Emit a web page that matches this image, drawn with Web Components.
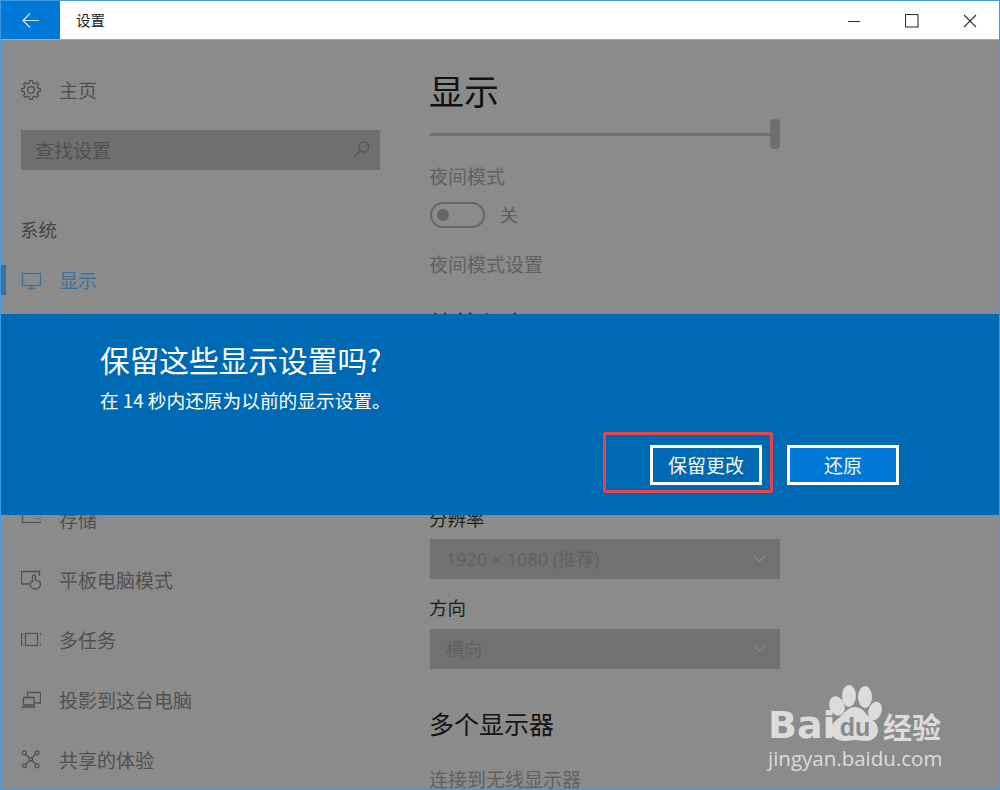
<!DOCTYPE html>
<html lang="zh-CN">
<head>
<meta charset="utf-8">
<title>设置</title>
<style>
html,body{margin:0;padding:0;width:1000px;height:790px;overflow:hidden;background:#8b8b8b}
body{font-family:"Noto Sans CJK SC","Microsoft YaHei",sans-serif}
</style>
</head>
<body>
<settings-window>
  <title-bar slot="top">设置</title-bar>
  <side-nav slot="side">
    <nav-row icon="gear">主页</nav-row>
    <search-box>查找设置</search-box>
    <nav-group>系统</nav-group>
    <nav-row icon="monitor" active>显示</nav-row>
    <nav-gap></nav-gap>
    <nav-row icon="storage">存储</nav-row>
    <nav-row icon="tablet">平板电脑模式</nav-row>
    <nav-row icon="multi">多任务</nav-row>
    <nav-row icon="project">投影到这台电脑</nav-row>
    <nav-row icon="share">共享的体验</nav-row>
  </side-nav>
  <display-page slot="main"></display-page>
  <keep-dialog slot="over"></keep-dialog>
  <baidu-mark slot="over"></baidu-mark>
</settings-window>

<script>
const FONT = '"Noto Sans CJK SC","Microsoft YaHei",sans-serif';
function gearPath(){
  const n=8,cx=10,cy=10,R=9.4,r=7.2;let d='';
  for(let i=0;i<n;i++){
    const a=i*2*Math.PI/n-Math.PI/2,w=Math.PI/n;
    const pts=[[r,a-w*.62],[R,a-w*.34],[R,a+w*.34],[r,a+w*.62]];
    pts.forEach((p,j)=>{
      const x=(cx+p[0]*Math.cos(p[1])).toFixed(2),y=(cy+p[0]*Math.sin(p[1])).toFixed(2);
      d+=(i===0&&j===0?'M':'L')+x+' '+y+' ';
    });
  }
  return d+'Z';
}
const ICONS={
  gear:`<path d="${gearPath()}"/><circle cx="10" cy="10" r="3.4"/>`,
  monitor:`<rect x="1.5" y="3.5" width="18" height="12"/><path d="M10.5 15.5v2.5M6.5 18.5h8"/>`,
  storage:`<rect x="1.5" y="2.5" width="19" height="10"/><path d="M15 8.500h1M17.500 8.500h1"/>`,
  tablet:`<path d="M8 14H.5V1.500h18V6"/><path d="M11.500 12V6.500a1.500 1.500 0 0 1 3 0V10l2.500.8a3 3 0 0 1 2.500 3c0 3-2 5.200-5 5.200s-5.500-2-5.500-5c0-1.500 1-2.600 2.500-3.200"/>`,
  multi:`<rect x="4.500" y="3.500" width="12" height="12"/><path d="M2 4H.5v11H2M19 4h1.500v11H19"/>`,
  project:`<path d="M6.500 7V2.500h13V13H14"/><path d="M2.500 7.500h10.500V15H2.500zM.5 17h14"/>`,
  share:`<circle cx="3.300" cy="2.900" r="1.900"/><circle cx="16" cy="2.900" r="1.900"/><circle cx="3.300" cy="15.700" r="1.900"/><circle cx="16" cy="15.700" r="1.900"/><rect x="8" y="7.600" width="3.400" height="3.400" rx="1"/><path d="M4.600 4.300 8 7.600M14.700 4.300 11.400 7.600M4.600 14.300 8 11M14.700 14.300 11.400 11"/>`,
  search:`<circle cx="11.500" cy="7" r="5"/><path d="M8 11 2 17"/>`,
  chevron:`<path d="M1 6l7 7 7-7" transform="translate(1.500 0)"/>`
};
class El extends HTMLElement{
  constructor(){super();this.attachShadow({mode:'open'});}
  set html(v){this.shadowRoot.innerHTML=v;}
}
function reg(name,css,markup){
  customElements.define(name,class extends El{
    connectedCallback(){
      this.html=`<style>${css}</style>`+(typeof markup==='function'?markup(this):markup);
    }
  });
}
reg('ui-icon',`:host{display:block;width:20px;height:20px;flex:none;overflow:hidden}
 svg{display:block;width:100%;height:100%;fill:none;stroke:currentColor;stroke-width:1.3;overflow:hidden}`,
 h=>`<svg viewBox="0 0 20 20" aria-hidden="true">${ICONS[h.getAttribute('name')]||''}</svg>`);

reg('settings-window',`:host{display:flex;flex-direction:column;position:relative;box-sizing:border-box;width:1000px;height:790px;overflow:hidden;border:1px solid #3f9ae4;background:#8b8b8b;font-family:${FONT}}
 .body{flex:1;display:flex;min-height:0;overflow:hidden;border-top:1px solid #a8a8a8;margin-top:-1px}
 .side{display:block;width:429px;flex:none}
 .main{flex:1;min-width:0}`,
 `<slot name="top"></slot><div class="body"><div class="side"><slot name="side"></slot></div><div class="main"><slot name="main"></slot></div></div><slot name="over"></slot>`);

reg('title-bar',`:host{display:flex;height:39px;flex:none;background:#fff;color:#222;font-size:14.5px;align-items:center}
 .back{width:59px;height:100%;background:#0078d7;display:flex;align-items:center;justify-content:center;color:#cfe6f8;margin-right:16px}
 .back svg{width:17px;height:17px;fill:none;stroke:currentColor;stroke-width:1.2}
 .t{flex:1;line-height:37px;height:39px}
 .c{width:58px;height:100%;display:flex;align-items:center;justify-content:center;color:#333}
 .c svg{width:14px;height:14px;fill:none;stroke:currentColor;stroke-width:1.1}`,
 `<div class="back"><svg viewBox="0 0 17 17"><path d="M8 1.500 1 8.500l7 7M1 8.500h16"/></svg></div>
  <div class="t"><slot></slot></div>
  <div class="c"><svg viewBox="0 0 14 14"><path d="M1 7.500h12"/></svg></div>
  <div class="c"><svg viewBox="0 0 14 14"><rect x=".5" y=".5" width="12.500" height="12.500"/></svg></div>
  <div class="c"><svg viewBox="0 0 14 14"><path d="M1 1l12 12M13 1 1 13"/></svg></div>`);

reg('side-nav',`:host{display:block;padding-top:20px}`,`<slot></slot>`);

reg('nav-row',`:host{display:flex;position:relative;align-items:center;height:60px;padding-left:20px;color:#505050;font-size:19px;white-space:nowrap}
 :host([active]){color:#3f6f9b}
 ui-icon{margin-right:18px}
 .t{padding-bottom:2px}
 .bar{display:none;position:absolute;left:0;top:15px;width:5px;height:30px;background:#3a729f}
 :host([active]) .bar{display:block}`,
 h=>`<div class="bar"></div><ui-icon name="${h.getAttribute('icon')}"></ui-icon><div class="t"><slot></slot></div>`);

reg('nav-gap',`:host{display:block;height:180px}`,``);
reg('nav-group',`:host{display:block;margin:40px 0 0 19px;height:40px;line-height:38px;font-size:18.500px;color:#424242}`,`<slot></slot>`);

reg('search-box',`:host{display:flex;align-items:center;box-sizing:border-box;margin:10px 0 0 20px;width:359px;height:40px;padding:0 8px 0 14px;background:#6f6f6f;color:#505050;font-size:19px}
 .t{flex:1;padding-bottom:2px}
 ui-icon{color:#555}`,
 `<div class="t"><slot></slot></div><ui-icon name="search"></ui-icon>`);

reg('page-slider',`:host{display:flex;align-items:center;width:350px;height:30px}
 .track{flex:1;height:3px;background:#707070}
 .thumb{width:10px;height:30px;border-radius:4px;background:#6f6f6f;margin-left:-1px}`,
 `<div class="track"></div><div class="thumb"></div>`);

reg('page-toggle',`:host{display:flex;align-items:center;height:26px;gap:15px;color:#5f5f5f;font-size:18px}
 .sw{box-sizing:border-box;width:55px;height:26px;border:2.500px solid #666;border-radius:13px;display:flex;align-items:center;padding-left:5px}
 .dot{width:12px;height:12px;border-radius:50%;background:#666}
 .t{padding-bottom:2px}`,
 `<div class="sw"><div class="dot"></div></div><div class="t"><slot></slot></div>`);

reg('combo-box',`:host{display:flex;align-items:center;box-sizing:border-box;width:350px;height:40px;padding:0 12px 0 16px;background:#717171;color:#606060;font-size:18px;font-family:"Open Sans",${FONT};white-space:nowrap}
 .t{flex:1;padding-bottom:2px}
 ui-icon{width:16px;height:16px;color:#8a8a8a}`,
 `<div class="t"><slot></slot></div><ui-icon name="chevron"></ui-icon>`);

reg('display-page',`:host{display:block;height:750px;overflow:hidden;padding-top:30px;box-sizing:border-box;white-space:nowrap}
 h1,h2,p{margin:0;font-weight:400}
 h1,h2,.mut,.lab{margin-left:-1px}
 h1{font-size:35px;line-height:40px;color:#111;margin-bottom:9px}
 h2{font-size:25px;line-height:32px;color:#151515}
 .mut{font-size:19px;line-height:24px;color:#606060}
 .lab{font-size:18.500px;line-height:24px;color:#1e1e1e}`,
 `<h1>显示</h1>
  <page-slider></page-slider>
  <p class="mut" style="margin-top:15px">夜间模式</p>
  <page-toggle style="margin-top:14px">关</page-toggle>
  <p class="mut" style="margin-top:24px">夜间模式设置</p>
  <h2 style="margin-top:31px">缩放与布局</h2>
  <p class="lab" style="margin-top:167px">分辨率</p>
  <combo-box style="margin-top:9px">1920 × 1080 (推荐)</combo-box>
  <p class="lab" style="margin-top:16px">方向</p>
  <combo-box style="margin-top:10px">横向</combo-box>
  <h2 style="margin-top:38px">多个显示器</h2>
  <p class="mut" style="margin-top:28px">连接到无线显示器</p>`);

reg('keep-dialog',`:host{display:block;position:absolute;left:0;right:0;top:313px;height:201px;box-sizing:border-box;padding:26px 100px 0 99px;background:#0069b4;color:#fff}
 h3{margin:0;font-weight:400;font-size:29.700px;line-height:40px;white-space:nowrap}
 p{margin:8px 0 0;font-size:18.700px;line-height:24px;white-space:nowrap}
 .btns{display:flex;justify-content:flex-end;gap:25px;margin-top:33px;position:relative}
 .mark{position:absolute;right:126px;top:-13px;width:170px;height:61px;box-sizing:border-box;border:3px solid #e2474d;border-radius:2px}`,
 `<h3>保留这些显示设置吗?</h3>
  <p>在 14 秒内还原为以前的显示设置。</p>
  <div class="btns"><dlg-button>保留更改</dlg-button><dlg-button primary>还原</dlg-button><div class="mark"></div></div>`);

reg('dlg-button',`:host{display:flex;align-items:center;justify-content:center;box-sizing:border-box;width:112px;height:40px;border:3px solid #fff;color:#f2f7fb;font-size:19px;padding-bottom:2px}
 :host([primary]){background:#0078d7}`,`<slot></slot>`);

reg('baidu-mark',`:host{display:block;position:absolute;left:767px;top:693px;width:185px;height:96px;color:#dcdcdc;font-family:"DejaVu Sans",sans-serif}
 svg{position:absolute;left:0;top:0;width:185px;height:96px;overflow:visible}
 .bai{position:absolute;left:0;top:2px;font-size:38px;font-weight:700;line-height:58px}
 .du{position:absolute;left:70px;top:19px;width:34px;text-align:center;font-size:25px;line-height:28px;font-weight:700;color:#8b8b8b;font-family:"Liberation Sans",sans-serif}
 .zh{position:absolute;left:115px;top:14px;font-family:${FONT};font-size:29px;line-height:36px;font-weight:700;white-space:nowrap}
 .url{position:absolute;left:0;top:50px;font-family:"Open Sans",sans-serif;font-size:20.500px;line-height:28px;white-space:nowrap}`,
 `<svg viewBox="0 0 185 96" aria-hidden="true" fill="#dcdcdc">
   <ellipse cx="69" cy="12" rx="7.500" ry="10" transform="rotate(-22 69 12)"/>
   <ellipse cx="81" cy="2" rx="7" ry="11"/>
   <ellipse cx="97" cy="3" rx="7" ry="11"/>
   <ellipse cx="107" cy="17" rx="6.500" ry="9.500" transform="rotate(20 107 17)"/>
   <path d="M87 13c6 0 10 5 13 9s10 6 10 14-7 11-13 11c-4 0-6-1-10-1s-6 1-10 1c-8 0-14-4-14-11s6-10 10-14 8-9 14-9z"/>
  </svg>
  <div class="bai">Bai</div><div class="du">du</div><div class="zh">经验</div><div class="url">jingyan.baidu.com</div>`);
</script>
</body>
</html>
